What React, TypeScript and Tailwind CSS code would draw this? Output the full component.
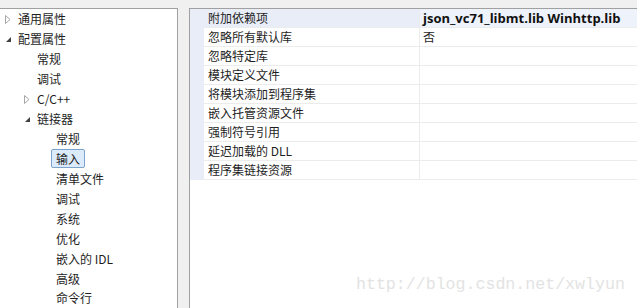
import React from "react";

const tree: { label: string; level: number; arrow?: "closed" | "open"; selected?: boolean }[] = [
  { label: "通用属性", level: 0, arrow: "closed" },
  { label: "配置属性", level: 0, arrow: "open" },
  { label: "常规", level: 1 },
  { label: "调试", level: 1 },
  { label: "C/C++", level: 1, arrow: "closed" },
  { label: "链接器", level: 1, arrow: "open" },
  { label: "常规", level: 2 },
  { label: "输入", level: 2, selected: true },
  { label: "清单文件", level: 2 },
  { label: "调试", level: 2 },
  { label: "系统", level: 2 },
  { label: "优化", level: 2 },
  { label: "嵌入的 IDL", level: 2 },
  { label: "高级", level: 2 },
  { label: "命令行", level: 2 },
];

const props = [
  { name: "附加依赖项", value: "json_vc71_libmt.lib Winhttp.lib" },
  { name: "忽略所有默认库", value: "否" },
  { name: "忽略特定库", value: "" },
  { name: "模块定义文件", value: "" },
  { name: "将模块添加到程序集", value: "" },
  { name: "嵌入托管资源文件", value: "" },
  { name: "强制符号引用", value: "" },
  { name: "延迟加载的 DLL", value: "" },
  { name: "程序集链接资源", value: "" },
];

function Arrow({ kind }: { kind: "closed" | "open" }) {
  if (kind === "closed") {
    return (
      <svg width="8" height="9" viewBox="0 0 8 9" className="shrink-0">
        <path d="M1.5 0.5 L6 4.5 L1.5 8.5 Z" fill="none" stroke="#a6a6a6" strokeWidth="1" />
      </svg>
    );
  }
  return (
    <svg width="8" height="9" viewBox="0 0 8 9" className="shrink-0">
      <path d="M7 2 L7 7 L2 7 Z" fill="#404040" />
    </svg>
  );
}

const pad = ["pl-[4px]", "pl-[23px]", "pl-[42px]"];

export default function App() {
  return (
    <div
      className="w-[637px] h-[308px] overflow-hidden bg-[#f0f0f0] flex flex-col text-[12px] text-[#1e1e1e]"
      style={{ fontFamily: '"Noto Sans CJK SC", "Noto Sans", sans-serif' }}
    >
      <div className="h-[8px] shrink-0" />
      <div className="flex flex-1 min-h-0">
        <div className="w-[178px] shrink-0 bg-white border-t border-r border-[#a0a0a0] flex flex-col">
          {tree.map((t, i) => (
            <div key={i} className={`h-[20px] pt-[1px] flex items-center ${pad[t.level]}`}>
              <div className="w-[14px] flex justify-start">{t.arrow && <Arrow kind={t.arrow} />}</div>
              {t.selected ? (
                <span className="h-[19px] -ml-[5px] px-[4px] flex items-center rounded-[2px] border border-[#7da2ce] bg-[#dcebfc] leading-none">
                  {t.label}
                </span>
              ) : (
                <span className="leading-none">{t.label}</span>
              )}
            </div>
          ))}
        </div>
        <div className="w-[11px] shrink-0" />
        <div className="flex-1 bg-white border-t border-l border-[#a0a0a0] relative">
          <div className="flex flex-col">
            {props.map((p, i) => (
              <div key={i} className="flex h-[19px]">
                <div className="w-[14px] shrink-0 bg-[#e9edf8]" />
                <div
                  className={`w-[216px] shrink-0 border-b border-r border-[#ececec] pl-[4px] flex items-center leading-none ${
                    i === 0 ? "bg-[#e9edf8]" : ""
                  }`}
                >
                  {p.name}
                </div>
                <div
                  className={`flex-1 border-b border-[#ececec] pl-[3px] flex items-center leading-none ${
                    i === 0 ? "bg-[#eef2fb] font-bold text-[13px] text-[#111]" : ""
                  }`}
                  style={i === 0 ? { fontFamily: '"Open Sans", "Noto Sans", sans-serif' } : undefined}
                >
                  {p.value}
                </div>
              </div>
            ))}
          </div>
          <div
            className="absolute left-[166px] top-[268px] text-[16.6px] text-[#e3e3e3] leading-none"
            style={{ fontFamily: '"Liberation Mono", monospace' }}
          >
            http://blog.csdn.net/xwlyun
          </div>
        </div>
      </div>
    </div>
  );
}
